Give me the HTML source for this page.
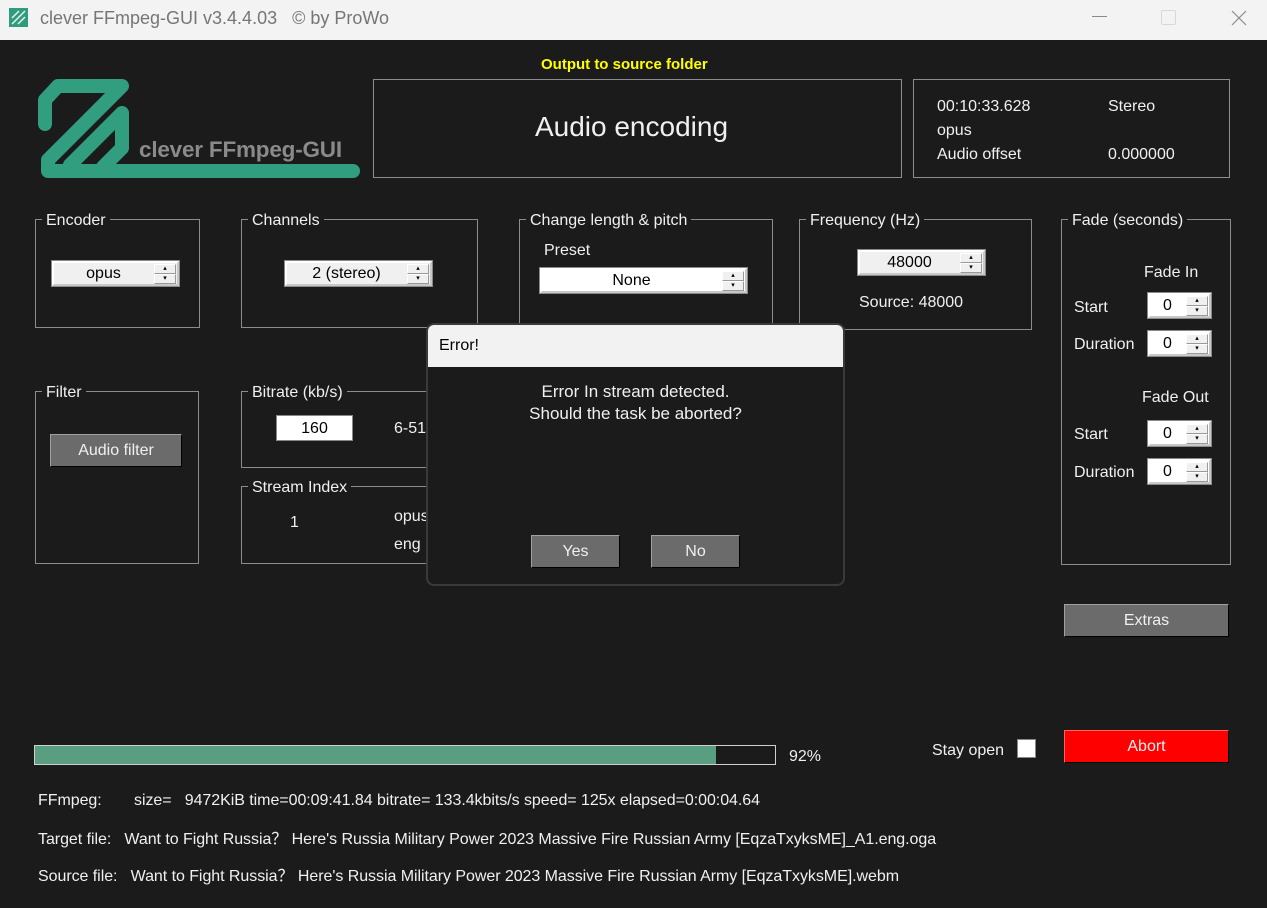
<!DOCTYPE html>
<html><head><meta charset="utf-8"><style>
*{box-sizing:border-box;margin:0;padding:0}
body{width:1267px;height:908px;background:#1b1b1b;font-family:"Liberation Sans",Arial,sans-serif;font-size:16px;color:#f0f0f0;position:relative;overflow:hidden}
.a{position:absolute;white-space:nowrap}
.g{position:absolute;border:1px solid #8c8c8c;border-top:none}
.g::before{content:"";position:absolute;left:-1px;right:-1px;top:0;border-top:1px solid #8c8c8c}
.g>.l{position:absolute;top:-8px;left:6px;background:#1b1b1b;padding:0 4px;line-height:20px}
.sp{position:absolute;background:#f0f0f0;border:2px solid #fff;border-right-color:#c8c8c8;border-bottom-color:#c8c8c8;outline:1px solid #8a8a8a;color:#000;line-height:21px}
.sp .t{position:absolute;left:0;right:24px;top:0;text-align:center}
.sp .b{position:absolute;right:1px;width:22px;height:10px;background:#f0f0f0;border:1px solid #fff;border-right-color:#999;border-bottom-color:#999;font-size:7px;line-height:8px;text-align:center;color:#000}
.w{background:#fff}
.btn{position:absolute;background:#6b6b6b;border:1px solid #a0a0a0;border-right-color:#000;border-bottom-color:#000;text-align:center;color:#f0f0f0}
.ft{letter-spacing:-0.05px}
</style></head><body>
<div class="a" style="left:0;top:0;width:1267px;height:40px;background:#f3f3f3"></div>
<svg class="a" style="left:9px;top:8px" width="20" height="20"><rect width="19" height="19" fill="#2f9c7e"/><path d="M3 10L10 3M3 16L16 3M9 16L16 9" stroke="#e8f5f0" stroke-width="1.5"/></svg>
<div class="a" style="left:40px;top:8px;font-size:18px;color:#767676">clever FFmpeg-GUI v3.4.4.03&nbsp;&nbsp;&nbsp;© by ProWo</div>
<div class="a" style="left:1092px;top:16px;width:15px;border-top:1px solid #8a8a8a"></div>
<div class="a" style="left:1161px;top:10px;width:15px;height:15px;border:1px solid #d8d8d8;border-radius:2px"></div>
<svg class="a" style="left:1231px;top:10px" width="16" height="16"><path d="M1 1L15 15M15 1L1 15" stroke="#8a8a8a" stroke-width="1.2"/></svg>

<svg class="a" style="left:0;top:0" width="370" height="190">
<g fill="none" stroke="#319e80" stroke-width="14" stroke-linecap="round" stroke-linejoin="round">
<path d="M45 124L45 100L58 86L122 86L48 160L48 171L353 171"/>
<path d="M122 113L122 148L103 167M122 113L70 165"/>
</g>
<text x="139" y="157" font-family="Liberation Sans" font-weight="bold" font-size="22.5" fill="#8a8a8a" letter-spacing="-0.2">clever FFmpeg-GUI</text>
</svg>

<div class="a" style="left:541px;top:56px;color:#ffff00;font-weight:bold;font-size:15px">Output to source folder</div>
<div class="a" style="left:373px;top:79px;width:529px;height:99px;border:1px solid #8c8c8c"></div>
<div class="a" style="left:373px;top:111px;width:517px;text-align:center;font-size:28px">Audio encoding</div>
<div class="a" style="left:913px;top:79px;width:317px;height:99px;border:1px solid #8c8c8c"></div>
<div class="a" style="left:937px;top:95px;line-height:24px">00:10:33.628<br>opus<br>Audio offset</div>
<div class="a" style="left:1108px;top:95px;line-height:24px">Stereo<br><br>0.000000</div>

<div class="g" style="left:35px;top:219px;width:165px;height:109px"><span class="l">Encoder</span></div>
<div class="sp" style="left:52px;top:261px;width:127px;height:25px"><span class="t">opus</span><span class="b" style="top:1px">▴</span><span class="b" style="top:11px">▾</span></div>
<div class="g" style="left:241px;top:219px;width:237px;height:109px"><span class="l">Channels</span></div>
<div class="sp" style="left:285px;top:261px;width:147px;height:25px"><span class="t">2 (stereo)</span><span class="b" style="top:1px">▴</span><span class="b" style="top:11px">▾</span></div>
<div class="g" style="left:519px;top:219px;width:254px;height:110px"><span class="l">Change length &amp; pitch</span></div>
<div class="a" style="left:544px;top:242px">Preset</div>
<div class="sp w" style="left:540px;top:268px;width:207px;height:25px"><span class="t">None</span><span class="b" style="top:1px">▴</span><span class="b" style="top:11px">▾</span></div>
<div class="g" style="left:799px;top:219px;width:233px;height:111px"><span class="l">Frequency (Hz)</span></div>
<div class="sp" style="left:858px;top:250px;width:127px;height:25px"><span class="t">48000</span><span class="b" style="top:1px">▴</span><span class="b" style="top:11px">▾</span></div>
<div class="a" style="left:859px;top:294px">Source: 48000</div>

<div class="g" style="left:1061px;top:219px;width:170px;height:346px"><span class="l">Fade (seconds)</span></div>
<div class="a" style="left:1144px;top:264px">Fade In</div>
<div class="a" style="left:1074px;top:299px">Start</div>
<div class="sp w" style="left:1148px;top:293px;width:63px;height:25px"><span class="t">0</span><span class="b" style="top:1px">▴</span><span class="b" style="top:11px">▾</span></div>
<div class="a" style="left:1074px;top:336px">Duration</div>
<div class="sp w" style="left:1148px;top:331px;width:63px;height:25px"><span class="t">0</span><span class="b" style="top:1px">▴</span><span class="b" style="top:11px">▾</span></div>
<div class="a" style="left:1142px;top:389px">Fade Out</div>
<div class="a" style="left:1074px;top:426px">Start</div>
<div class="sp w" style="left:1148px;top:421px;width:63px;height:25px"><span class="t">0</span><span class="b" style="top:1px">▴</span><span class="b" style="top:11px">▾</span></div>
<div class="a" style="left:1074px;top:464px">Duration</div>
<div class="sp w" style="left:1148px;top:459px;width:63px;height:25px"><span class="t">0</span><span class="b" style="top:1px">▴</span><span class="b" style="top:11px">▾</span></div>

<div class="g" style="left:35px;top:391px;width:164px;height:173px"><span class="l">Filter</span></div>
<div class="btn" style="left:50px;top:434px;width:132px;height:33px;line-height:32px">Audio filter</div>
<div class="g" style="left:241px;top:391px;width:200px;height:77px"><span class="l">Bitrate (kb/s)</span></div>
<div class="a" style="left:276px;top:415px;width:77px;height:26px;background:#fff;border:1px solid #888;color:#000;text-align:center;line-height:25px">160</div>
<div class="a" style="left:394px;top:420px">6-510</div>
<div class="g" style="left:241px;top:486px;width:200px;height:78px"><span class="l">Stream Index</span></div>
<div class="a" style="left:290px;top:514px">1</div>
<div class="a" style="left:394px;top:503px;line-height:28px">opus<br>eng</div>

<div class="a" style="left:426px;top:323px;width:419px;height:263px;background:#1b1b1b;border:2px solid #3a3a3a;border-radius:8px;overflow:hidden">
<div style="height:42px;background:#f2f2f2;color:#000;padding:12px 0 0 11px">Error!</div>
<div style="text-align:center;margin-top:14px;line-height:22px;font-size:17px">Error In stream detected.<br>Should the task be aborted?</div>
</div>
<div class="btn" style="left:531px;top:535px;width:89px;height:33px;line-height:32px">Yes</div>
<div class="btn" style="left:651px;top:535px;width:89px;height:33px;line-height:32px">No</div>

<div class="btn" style="left:1064px;top:604px;width:165px;height:33px;line-height:32px">Extras</div>

<div class="a" style="left:34px;top:745px;width:742px;height:20px;border:1px solid #d0d0d0;background:#1b1b1b"><div style="width:681px;height:18px;background:#5a9e81"></div></div>
<div class="a" style="left:789px;top:748px">92%</div>
<div class="a" style="left:932px;top:742px">Stay open</div>
<div class="a" style="left:1017px;top:739px;width:19px;height:19px;background:#fff;border:1px solid #888"></div>
<div class="a" style="left:1064px;top:730px;width:165px;height:33px;background:#ff0000;border:1px solid #ff6060;border-right-color:#000;border-bottom-color:#000;text-align:center;line-height:32px">Abort</div>

<div class="a ft" style="left:38px;top:792px">FFmpeg:</div>
<div class="a ft" style="left:134px;top:792px">size=&nbsp;&nbsp;&nbsp;9472KiB time=00:09:41.84 bitrate= 133.4kbits/s speed= 125x elapsed=0:00:04.64</div>
<div class="a ft" style="left:38px;top:825px">Target file:&nbsp;&nbsp;&nbsp;Want to Fight Russia？ Here's Russia Military Power 2023 Massive Fire Russian Army [EqzaTxyksME]_A1.eng.oga</div>
<div class="a ft" style="left:38px;top:862px">Source file:&nbsp;&nbsp;&nbsp;Want to Fight Russia？ Here's Russia Military Power 2023 Massive Fire Russian Army [EqzaTxyksME].webm</div>
</body></html>
